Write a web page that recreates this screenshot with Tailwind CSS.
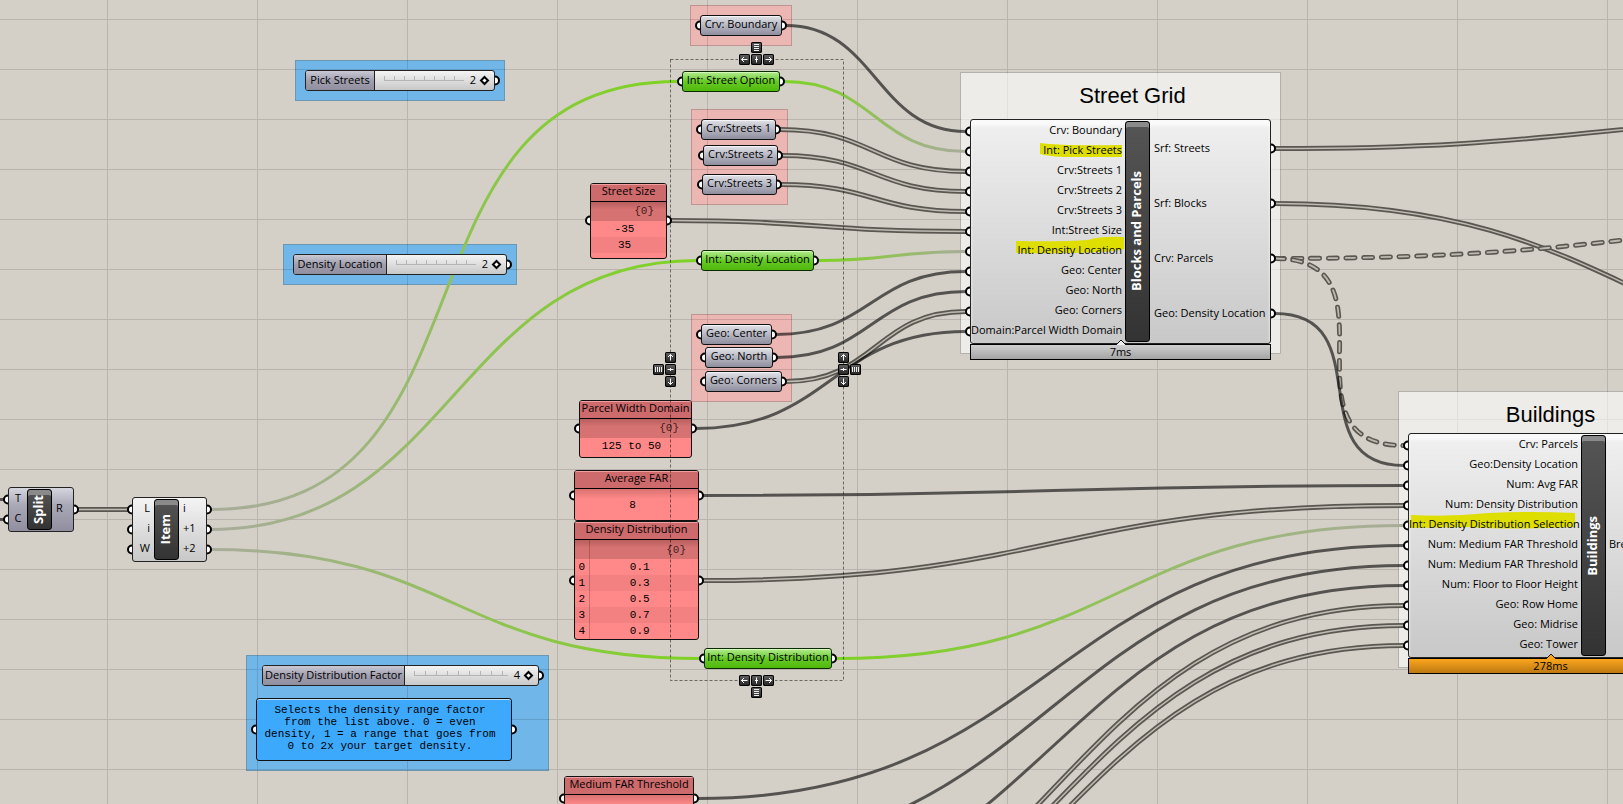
<!DOCTYPE html>
<html lang="en">
<head>
<meta charset="utf-8">
<title>Street Grid definition</title>
<script src="https://cdn.jsdelivr.net/npm/@tailwindcss/browser@4"></script>
</head>
<body class="bg-[#d4d0c8]">
<main class="relative h-screen w-full overflow-hidden bg-[#d4d0c8] font-['Open_Sans','Noto_Sans',sans-serif] text-[11px] leading-5 text-black">

  <!-- groups -->
  <section class="absolute left-[295px] top-[60px] h-[41px] w-[210px] border border-[#6b97b3] bg-[#70b6e8]"></section>
  <section class="absolute left-[283px] top-[244px] h-[41px] w-[234px] border border-[#6b97b3] bg-[#70b6e8]"></section>
  <section class="absolute left-[246px] top-[655px] h-[116px] w-[303px] border border-[#6b97b3] bg-[#70b6e8]"></section>
  <section class="absolute left-[690px] top-[5px] h-[41px] w-[102px] border border-[#bd9593] bg-[#ecb6b3]"></section>
  <section class="absolute left-[691px] top-[109px] h-[96px] w-[97px] border border-[#bd9593] bg-[#ecb6b3]"></section>
  <section class="absolute left-[691px] top-[314px] h-[88px] w-[101px] border border-[#bd9593] bg-[#ecb6b3]"></section>
  <section class="absolute left-[960px] top-[72px] h-[282px] w-[321px] border border-[#b3b1ab] bg-[#edece8] pl-6 pt-2 text-center font-['Liberation_Sans',Arial,sans-serif] text-[22px] leading-[30px]"><h2 class="relative z-10">Street Grid</h2></section>
  <section class="absolute left-[1398px] top-[391px] h-[277px] w-[305px] border border-[#b3b1ab] bg-[#edece8] pt-2 text-center font-['Liberation_Sans',Arial,sans-serif] text-[22px] leading-[30px]"><h2 class="relative z-10">Buildings</h2></section>

  <!-- canvas grid, wires and ports -->
  <svg class="absolute inset-0 h-full w-full" aria-hidden="true">
    <defs>
      <pattern id="grid" x="107" y="19" width="150" height="50" patternUnits="userSpaceOnUse">
        <path d="M0 0H150V1H1V50H0Z" fill="#000" fill-opacity=".13"/>
      </pattern>
    </defs>
    <rect width="100%" height="100%" fill="url(#grid)"/>
    <path d="M961 73h319v280H961zM1399 392h300v275h-300z" fill="#edece8" fill-opacity=".6"/>
    <g id="wires" fill="none"></g>
    <g id="ports" fill="#fff" stroke="#000" stroke-width="2"></g>
  </svg>

  <!-- sliders -->
  <div class="absolute left-[305px] top-[70px] flex h-[21px] w-[190px] overflow-hidden rounded-[3px] border border-[#222] bg-linear-to-b from-[#f4f4f4] to-[#c8c8c8]">
    <label for="s1" class="w-[69px] border-r border-[#222] bg-linear-to-b from-[#c9c8d4] via-[#a19fae] to-[#918f9f] text-center leading-[17px]">Pick Streets</label>
    <div class="relative flex-1">
      <div class="absolute left-[9px] right-[30px] top-[5px] h-[5px] border-b border-[#b4b4b4] bg-[repeating-linear-gradient(90deg,#b4b4b4_0_1px,transparent_1px_10px)]"></div>
      <output for="s1" class="absolute right-[18px] leading-[17px]">2</output>
      <input id="s1" type="range" min="0" max="2" value="2" class="absolute right-[6px] top-[4px] h-[10px] w-[105px] appearance-none bg-transparent [&::-webkit-slider-thumb]:h-[7px] [&::-webkit-slider-thumb]:w-[7px] [&::-webkit-slider-thumb]:rotate-45 [&::-webkit-slider-thumb]:appearance-none [&::-webkit-slider-thumb]:border-2 [&::-webkit-slider-thumb]:border-black [&::-webkit-slider-thumb]:bg-white">
    </div>
  </div>
  <div class="absolute left-[293px] top-[254px] flex h-[21px] w-[214px] overflow-hidden rounded-[3px] border border-[#222] bg-linear-to-b from-[#f4f4f4] to-[#c8c8c8]">
    <label for="s2" class="w-[93px] border-r border-[#222] bg-linear-to-b from-[#c9c8d4] via-[#a19fae] to-[#918f9f] text-center leading-[17px]">Density Location</label>
    <div class="relative flex-1">
      <div class="absolute left-[9px] right-[30px] top-[5px] h-[5px] border-b border-[#b4b4b4] bg-[repeating-linear-gradient(90deg,#b4b4b4_0_1px,transparent_1px_10px)]"></div>
      <output for="s2" class="absolute right-[18px] leading-[17px]">2</output>
      <input id="s2" type="range" min="0" max="2" value="2" class="absolute right-[6px] top-[4px] h-[10px] w-[105px] appearance-none bg-transparent [&::-webkit-slider-thumb]:h-[7px] [&::-webkit-slider-thumb]:w-[7px] [&::-webkit-slider-thumb]:rotate-45 [&::-webkit-slider-thumb]:appearance-none [&::-webkit-slider-thumb]:border-2 [&::-webkit-slider-thumb]:border-black [&::-webkit-slider-thumb]:bg-white">
    </div>
  </div>
  <div class="absolute left-[262px] top-[665px] flex h-[21px] w-[277px] overflow-hidden rounded-[3px] border border-[#222] bg-linear-to-b from-[#f4f4f4] to-[#c8c8c8]">
    <label for="s3" class="w-[142px] border-r border-[#222] bg-linear-to-b from-[#c9c8d4] via-[#a19fae] to-[#918f9f] text-center leading-[17px]">Density Distribution Factor</label>
    <div class="relative flex-1">
      <div class="absolute left-[9px] right-[30px] top-[5px] h-[5px] border-b border-[#b4b4b4] bg-[repeating-linear-gradient(90deg,#b4b4b4_0_1px,transparent_1px_11px)]"></div>
      <output for="s3" class="absolute right-[18px] leading-[17px]">4</output>
      <input id="s3" type="range" min="0" max="4" value="4" class="absolute right-[6px] top-[4px] h-[10px] w-[120px] appearance-none bg-transparent [&::-webkit-slider-thumb]:h-[7px] [&::-webkit-slider-thumb]:w-[7px] [&::-webkit-slider-thumb]:rotate-45 [&::-webkit-slider-thumb]:appearance-none [&::-webkit-slider-thumb]:border-2 [&::-webkit-slider-thumb]:border-black [&::-webkit-slider-thumb]:bg-white">
    </div>
  </div>
  <p class="absolute left-[256px] top-[698px] h-[63px] w-[256px] rounded-[3px] border border-[#111] bg-[#3da9fc] pt-[5px] pr-2 text-center font-['Liberation_Mono',monospace] leading-3 whitespace-nowrap shadow-[inset_0_1px_0_#bfe2ff]">Selects the density range factor<br>from the list above. 0 = even<br>density, 1 = a range that goes from<br>0 to 2x your target density.</p>

  <!-- parameter capsules -->
  <div class="absolute left-[700px] top-[15px] h-[21px] w-[82px] rounded-[3px] border border-[#111] bg-linear-to-b from-[#e2e2e8] via-[#b6b6c2] to-[#8f8e9e] text-center leading-4 shadow-[inset_0_1px_0_#f4f4f8]">Crv: Boundary</div>
  <div class="absolute left-[682px] top-[71px] h-[21px] w-[98px] rounded-[3px] border border-[#0a2a00] bg-linear-to-b from-[#b4ec8c] via-[#66ca22] to-[#50b80c] text-center leading-4 shadow-[inset_0_1px_0_#d4f8b8]">Int: Street Option</div>
  <div class="absolute left-[701px] top-[119px] h-[21px] w-[75px] rounded-[3px] border border-[#111] bg-linear-to-b from-[#e2e2e8] via-[#b6b6c2] to-[#8f8e9e] text-center leading-4 shadow-[inset_0_1px_0_#f4f4f8]">Crv:Streets 1</div>
  <div class="absolute left-[703px] top-[145px] h-[21px] w-[75px] rounded-[3px] border border-[#111] bg-linear-to-b from-[#e2e2e8] via-[#b6b6c2] to-[#8f8e9e] text-center leading-4 shadow-[inset_0_1px_0_#f4f4f8]">Crv:Streets 2</div>
  <div class="absolute left-[702px] top-[174px] h-[21px] w-[75px] rounded-[3px] border border-[#111] bg-linear-to-b from-[#e2e2e8] via-[#b6b6c2] to-[#8f8e9e] text-center leading-4 shadow-[inset_0_1px_0_#f4f4f8]">Crv:Streets 3</div>
  <div class="absolute left-[701px] top-[250px] h-[21px] w-[113px] rounded-[3px] border border-[#0a2a00] bg-linear-to-b from-[#b4ec8c] via-[#66ca22] to-[#50b80c] text-center leading-4 shadow-[inset_0_1px_0_#d4f8b8]">Int: Density Location</div>
  <div class="absolute left-[701px] top-[324px] h-[21px] w-[71px] rounded-[3px] border border-[#111] bg-linear-to-b from-[#e2e2e8] via-[#b6b6c2] to-[#8f8e9e] text-center leading-4 shadow-[inset_0_1px_0_#f4f4f8]">Geo: Center</div>
  <div class="absolute left-[705px] top-[347px] h-[21px] w-[68px] rounded-[3px] border border-[#111] bg-linear-to-b from-[#e2e2e8] via-[#b6b6c2] to-[#8f8e9e] text-center leading-4 shadow-[inset_0_1px_0_#f4f4f8]">Geo: North</div>
  <div class="absolute left-[705px] top-[371px] h-[21px] w-[77px] rounded-[3px] border border-[#111] bg-linear-to-b from-[#e2e2e8] via-[#b6b6c2] to-[#8f8e9e] text-center leading-4 shadow-[inset_0_1px_0_#f4f4f8]">Geo: Corners</div>
  <div class="absolute left-[704px] top-[648px] h-[21px] w-[128px] rounded-[3px] border border-[#0a2a00] bg-linear-to-b from-[#b4ec8c] via-[#66ca22] to-[#50b80c] text-center leading-4 shadow-[inset_0_1px_0_#d4f8b8]">Int: Density Distribution</div>

  <!-- data panels -->
  <div class="absolute left-[590px] top-[183px] h-[76px] w-[77px] overflow-hidden rounded-[3px] border border-[#111] bg-[#ff8888] text-center font-['Liberation_Mono',monospace] leading-4">
    <h3 class="h-[18px] border-b border-black bg-[#cd6a6c] font-['Open_Sans',sans-serif] leading-[14px] shadow-[inset_0_1px_0_#f0a0a0]">Street Size</h3>
    <p class="h-[19px] bg-linear-to-b from-[#b85e5e] to-[#d67272] to-40% pr-3 text-right leading-[19px] text-black/75">{0}</p>
    <p class="pr-2">-35</p>
    <p class="bg-[#f38181] pr-2">35</p>
  </div>
  <div class="absolute left-[579px] top-[400px] h-[58px] w-[113px] overflow-hidden rounded-[3px] border border-[#111] bg-[#ff8888] text-center font-['Liberation_Mono',monospace] leading-4">
    <h3 class="h-[18px] border-b border-black bg-[#cd6a6c] font-['Open_Sans',sans-serif] leading-[14px] whitespace-nowrap shadow-[inset_0_1px_0_#f0a0a0]">Parcel Width Domain</h3>
    <p class="h-[19px] bg-linear-to-b from-[#b85e5e] to-[#d67272] to-40% pr-3 text-right leading-[19px] text-black/75">{0}</p>
    <p class="pr-2">125 to 50</p>
  </div>
  <div class="absolute left-[574px] top-[470px] h-[51px] w-[125px] overflow-hidden rounded-[3px] border border-[#111] bg-[#ff8888] text-center font-['Liberation_Mono',monospace]">
    <h3 class="h-[18px] border-b border-black bg-[#cd6a6c] font-['Open_Sans',sans-serif] leading-[14px] shadow-[inset_0_1px_0_#f0a0a0]">Average FAR</h3>
    <p class="h-[32px] bg-linear-to-b from-[#d87272] to-[#ff8888] to-30% pr-2 leading-[32px]">8</p>
  </div>
  <div class="absolute left-[574px] top-[521px] h-[119px] w-[125px] overflow-hidden rounded-[3px] border border-[#111] bg-[#ff8888] font-['Liberation_Mono',monospace] leading-4">
    <table class="w-full border-collapse text-center">
      <caption class="h-[18px] border-b border-black bg-[#cd6a6c] font-['Open_Sans',sans-serif] leading-[14px] shadow-[inset_0_1px_0_#f0a0a0]">Density Distribution</caption>
      <tbody>
      <tr class="h-[19px] bg-linear-to-b from-[#b85e5e] to-[#d67272] to-40%"><td class="w-[14px] border-r border-black/20 p-0"></td><td class="p-0 pr-3 text-right text-black/75">{0}</td></tr>
      <tr><th class="border-r border-black/20 p-0 font-normal">0</th><td class="p-0 pr-2">0.1</td></tr>
      <tr class="bg-[#f38181]"><th class="border-r border-black/20 p-0 font-normal">1</th><td class="p-0 pr-2">0.3</td></tr>
      <tr><th class="border-r border-black/20 p-0 font-normal">2</th><td class="p-0 pr-2">0.5</td></tr>
      <tr class="bg-[#f38181]"><th class="border-r border-black/20 p-0 font-normal">3</th><td class="p-0 pr-2">0.7</td></tr>
      <tr><th class="border-r border-black/20 p-0 font-normal">4</th><td class="p-0 pr-2">0.9</td></tr>
      </tbody>
    </table>
  </div>
  <div class="absolute left-[564px] top-[776px] h-[58px] w-[130px] overflow-hidden rounded-[3px] border border-[#111] bg-[#ff8888] text-center">
    <h3 class="h-[18px] border-b border-black bg-[#cd6a6c] leading-[14px] shadow-[inset_0_1px_0_#f0a0a0]">Medium FAR Threshold</h3>
    <p class="h-[32px] bg-linear-to-b from-[#d87272] to-[#ff8888] to-30%"></p>
  </div>

  <!-- Split -->
  <div class="absolute left-[8px] top-[487px] flex h-[45px] w-[66px] items-center rounded-[3px] border border-[#222] bg-linear-to-b from-[#d6d6de] via-[#a9a8b6] via-40% to-[#918f9f] py-px">
    <div class="w-[18px] pb-[3px] text-center"><p>T</p><p>C</p></div>
    <div class="flex h-full w-[25px] items-center justify-center rounded-[3px] border border-black bg-linear-to-b from-[#555] to-[#333] pr-[3px] text-[13px] font-bold text-white shadow-[inset_0_5px_0_#8a8a8a]"><span class="rotate-180 [writing-mode:vertical-rl]">Split</span></div>
    <p class="pb-[3px] pl-1">R</p>
  </div>
  <!-- Item -->
  <div class="absolute left-[132px] top-[497px] flex h-[65px] w-[75px] items-center rounded-[3px] border border-[#222] bg-linear-to-b from-[#f4f4f4] to-[#c8c8c8] py-px">
    <div class="w-[21px] pb-[3px] pr-1 text-right"><p>L</p><p>i</p><p>W</p></div>
    <div class="flex h-full w-[25px] items-center justify-center rounded-[3px] border border-black bg-linear-to-b from-[#555] to-[#333] pr-[3px] text-[13px] font-bold text-white shadow-[inset_0_5px_0_#8a8a8a]"><span class="rotate-180 [writing-mode:vertical-rl]">Item</span></div>
    <div class="pb-[3px] pl-1"><p>i</p><p>+1</p><p>+2</p></div>
  </div>

  <!-- Blocks and Parcels -->
  <div class="absolute left-[970px] top-[119px] h-[225px] w-[301px] rounded-[3px] border border-[#222] bg-linear-to-b from-[#f0f0f0] to-[#c8c8c8] shadow-[inset_0_6px_3px_#fafafa]">
    <svg class="absolute inset-0 h-full w-full" aria-hidden="true"><path d="M69 23Q90 26 151 25V37H92Q76 36 69 34ZM45 121Q90 122 117 120Q130 116 153 117V129L150 130Q120 134 45 133Z" fill="#dede00"/></svg>
    <div class="relative flex h-full">
      <ul class="w-[154px] whitespace-nowrap pr-[3px] text-right">
        <li>Crv: Boundary</li><li>Int: Pick Streets</li><li>Crv:Streets 1</li><li>Crv:Streets 2</li><li>Crv:Streets 3</li><li>Int:Street Size</li><li>Int: Density Location</li><li>Geo: Center</li><li>Geo: North</li><li>Geo: Corners</li><li>Domain:Parcel Width Domain</li>
      </ul>
      <div class="my-px flex w-[25px] items-center justify-center rounded-[3px] border border-black bg-linear-to-b from-[#555] to-[#333] pr-[3px] text-[13px] font-bold text-white shadow-[inset_0_5px_0_#8a8a8a]"><span class="rotate-180 [writing-mode:vertical-rl]">Blocks and Parcels</span></div>
      <ul class="pl-1 leading-[55px]"><li>Srf: Streets</li><li>Srf: Blocks</li><li>Crv: Parcels</li><li>Geo: Density Location</li></ul>
    </div>
  </div>
  <div class="absolute left-[970px] top-[344px] h-4 w-[301px] border border-black bg-linear-to-b from-[#cfcfcf] to-[#a4a4a4] text-center leading-[13px]">7ms
    <svg class="absolute -top-[6px] left-[144px] h-[6px] w-3" aria-hidden="true"><path d="M1 6L6 1L11 6" fill="#eee" stroke="#111"/></svg>
  </div>

  <!-- Buildings -->
  <div class="absolute left-[1408px] top-[433px] h-[225px] w-[285px] rounded-[3px] border border-[#222] bg-linear-to-b from-[#f0f0f0] to-[#c8c8c8] shadow-[inset_0_6px_3px_#fafafa]">
    <svg class="absolute inset-0 h-full w-full" aria-hidden="true"><path d="M2 81Q40 83 80 79Q120 77 166 79V93Q100 96 60 93L2 94Z" fill="#dede00"/></svg>
    <div class="relative flex h-full">
      <ul class="w-[172px] whitespace-nowrap pr-[3px] text-right">
        <li>Crv: Parcels</li><li>Geo:Density Location</li><li>Num: Avg FAR</li><li>Num: Density Distribution</li><li>Int: Density Distribution Selection</li><li>Num: Medium FAR Threshold</li><li>Num: Medium FAR Threshold</li><li>Num: Floor to Floor Height</li><li>Geo: Row Home</li><li>Geo: Midrise</li><li>Geo: Tower</li>
      </ul>
      <div class="my-px flex w-[25px] items-center justify-center rounded-[3px] border border-black bg-linear-to-b from-[#555] to-[#333] pr-[3px] text-[13px] font-bold text-white shadow-[inset_0_5px_0_#8a8a8a]"><span class="rotate-180 [writing-mode:vertical-rl]">Buildings</span></div>
      <p class="pl-[3px] leading-[220px]">Bre</p>
    </div>
  </div>
  <div class="absolute left-[1408px] top-[658px] h-4 w-[285px] border border-black bg-linear-to-b from-[#fba51c] to-[#bd7a12] text-center leading-[13px]">278ms
    <svg class="absolute -top-[6px] left-[136px] h-[6px] w-3" aria-hidden="true"><path d="M1 6L6 1L11 6" fill="#fba51c" stroke="#111"/></svg>
  </div>

  <!-- selection frame -->
  <div class="pointer-events-none absolute left-[670px] top-[59px] h-[622px] w-[174px]">
    <svg class="h-full w-full" aria-hidden="true"><rect x=".5" y=".5" width="173" height="621" fill="none" stroke="#000" stroke-opacity=".5" stroke-dasharray="3 2"/></svg>
  </div>

  <!-- alignment widgets -->
  <svg class="hidden">
    <symbol id="lines" viewBox="0 0 11 11"><path d="M3 2.5H8M3 4.5H8M3 6.5H8M3 8.5H8" stroke="#eee"/></symbol>
    <symbol id="bars" viewBox="0 0 11 11"><path d="M2.500 3V8M4.500 3V8M6.500 3V8M8.500 3V8" stroke="#eee"/></symbol>
    <symbol id="arrow" viewBox="0 0 11 11"><path d="M2.500 5.500H8.500M5 3L2.500 5.500L5 8" fill="none" stroke="#fff"/></symbol>
    <symbol id="mid" viewBox="0 0 11 11"><path d="M5.500 2.500V8.500M4 5.500H7" stroke="#fff"/></symbol>
  </svg>
  <div class="absolute left-[738px] top-[42px] grid grid-cols-3 gap-px bg-[linear-gradient(#d4d0c8,#d4d0c8)] bg-[length:100%_2px] bg-[position:0_17px] bg-no-repeat px-px">
    <button aria-label="Distribute columns" class="col-start-2 size-[11px] rounded-[2px] bg-linear-to-b from-[#666] to-[#222] ring-1 ring-black ring-inset"><svg class="size-[11px]"><use href="#lines"/></svg></button>
    <button aria-label="Align left" class="col-start-1 size-[11px] rounded-[2px] bg-linear-to-b from-[#666] to-[#222] ring-1 ring-black ring-inset"><svg class="size-[11px]"><use href="#arrow"/></svg></button>
    <button aria-label="Align centre" class="size-[11px] rounded-[2px] bg-linear-to-b from-[#666] to-[#222] ring-1 ring-black ring-inset"><svg class="size-[11px]"><use href="#mid"/></svg></button>
    <button aria-label="Align right" class="size-[11px] rounded-[2px] bg-linear-to-b from-[#666] to-[#222] ring-1 ring-black ring-inset"><svg class="size-[11px] rotate-180"><use href="#arrow"/></svg></button>
  </div>
  <div class="absolute left-[738px] top-[675px] grid grid-cols-3 gap-px bg-[linear-gradient(#d4d0c8,#d4d0c8)] bg-[length:100%_2px] bg-[position:0_5px] bg-no-repeat px-px">
    <button aria-label="Align left" class="size-[11px] rounded-[2px] bg-linear-to-b from-[#666] to-[#222] ring-1 ring-black ring-inset"><svg class="size-[11px]"><use href="#arrow"/></svg></button>
    <button aria-label="Align centre" class="size-[11px] rounded-[2px] bg-linear-to-b from-[#666] to-[#222] ring-1 ring-black ring-inset"><svg class="size-[11px]"><use href="#mid"/></svg></button>
    <button aria-label="Align right" class="size-[11px] rounded-[2px] bg-linear-to-b from-[#666] to-[#222] ring-1 ring-black ring-inset"><svg class="size-[11px] rotate-180"><use href="#arrow"/></svg></button>
    <button aria-label="Distribute columns" class="col-start-2 size-[11px] rounded-[2px] bg-linear-to-b from-[#666] to-[#222] ring-1 ring-black ring-inset"><svg class="size-[11px]"><use href="#lines"/></svg></button>
  </div>
  <div class="absolute left-[653px] top-[352px] grid grid-cols-2 gap-px">
    <button aria-label="Align top" class="col-start-2 size-[11px] rounded-[2px] bg-linear-to-b from-[#666] to-[#222] ring-1 ring-black ring-inset"><svg class="size-[11px] rotate-90"><use href="#arrow"/></svg></button>
    <button aria-label="Distribute rows" class="col-start-1 size-[11px] rounded-[2px] bg-linear-to-b from-[#666] to-[#222] ring-1 ring-black ring-inset"><svg class="size-[11px]"><use href="#bars"/></svg></button>
    <button aria-label="Align middle" class="size-[11px] rounded-[2px] bg-linear-to-b from-[#666] to-[#222] ring-1 ring-black ring-inset"><svg class="size-[11px] rotate-90"><use href="#mid"/></svg></button>
    <button aria-label="Align bottom" class="col-start-2 size-[11px] rounded-[2px] bg-linear-to-b from-[#666] to-[#222] ring-1 ring-black ring-inset"><svg class="size-[11px] -rotate-90"><use href="#arrow"/></svg></button>
  </div>
  <div class="absolute left-[838px] top-[352px] grid grid-cols-2 gap-px">
    <button aria-label="Align top" class="col-start-1 size-[11px] rounded-[2px] bg-linear-to-b from-[#666] to-[#222] ring-1 ring-black ring-inset"><svg class="size-[11px] rotate-90"><use href="#arrow"/></svg></button>
    <button aria-label="Align middle" class="col-start-1 size-[11px] rounded-[2px] bg-linear-to-b from-[#666] to-[#222] ring-1 ring-black ring-inset"><svg class="size-[11px] rotate-90"><use href="#mid"/></svg></button>
    <button aria-label="Distribute rows" class="size-[11px] rounded-[2px] bg-linear-to-b from-[#666] to-[#222] ring-1 ring-black ring-inset"><svg class="size-[11px]"><use href="#bars"/></svg></button>
    <button aria-label="Align bottom" class="col-start-1 size-[11px] rounded-[2px] bg-linear-to-b from-[#666] to-[#222] ring-1 ring-black ring-inset"><svg class="size-[11px] -rotate-90"><use href="#arrow"/></svg></button>
  </div>
</main>

<script>
const NS = 'http://www.w3.org/2000/svg';
const wires = document.getElementById('wires');
const ports = document.getElementById('ports');
function add(parent, tag, attrs) {
  const el = document.createElementNS(NS, tag);
  for (const k in attrs) el.setAttribute(k, attrs[k]);
  parent.appendChild(el);
  return el;
}
// kind: s = item, d = list, t = tree, i / o = wire into / out of a selected parameter
const links = [
  ['i', 211, 509.5, 678, 81.5], ['i', 211, 529.5, 697, 260.5], ['i', 211, 549.5, 700, 658.5],
  ['o', 784, 81.5, 966, 151.5], ['o', 818, 260.5, 966, 251.5], ['o', 836, 658.5, 1404, 525.5],
  ['s', 786, 25.5, 966, 131.5], ['d', 780, 129.5, 966, 171.5], ['d', 782, 155.5, 966, 191.5],
  ['d', 781, 184.5, 966, 211.5], ['d', 671, 220.5, 966, 231.5], ['s', 776, 334.5, 966, 271.5],
  ['s', 777, 357.5, 966, 291.5], ['d', 786, 381.5, 966, 311.5], ['s', 696, 428.5, 966, 331.5],
  ['s', 703, 495.5, 1404, 485.5], ['d', 703, 580.5, 1404, 505.5], ['s', 698, 798.5, 1404, 545.5],
  ['s', 698, 850.5, 1404, 565.5], ['s', 698, 910.5, 1404, 585.5], ['d', 698, 976.5, 1404, 605.5],
  ['d', 698, 989.5, 1404, 625.5], ['d', 698, 1004.5, 1404, 645.5],
  ['d', 1275, 148.5, 1900, 117.5], ['d', 1275, 203.5, 2000, 375.5], ['t', 1275, 258.5, 2050, 212.5],
  ['t', 1275, 258.5, 1404, 445.5], ['s', 1275, 313.5, 1404, 465.5],
  ['d', 78, 509.5, 128, 509.5], ['s', -60, 488.5, 4, 499.5], ['s', -60, 519.5, 4, 519.5]
];
const defs = add(wires, 'defs', {});
links.forEach(([kind, x1, y1, x2, y2], n) => {
  const r = Math.max((x2 - x1) / 2, Math.abs(y2 - y1) * 0.7);
  const d = `M${x1} ${y1}C${x1 + r} ${y1} ${x2 - r} ${y2} ${x2} ${y2}`;
  if (kind === 's') add(wires, 'path', { d, stroke: '#000', 'stroke-opacity': .6, 'stroke-width': 3 });
  if (kind === 'd') {
    add(wires, 'path', { d, stroke: '#595750', 'stroke-width': 5 });
    add(wires, 'path', { d, stroke: '#bebbb3', 'stroke-width': 1.5 });
  }
  if (kind === 't') {
    add(wires, 'path', { d, stroke: '#595750', 'stroke-width': 5, 'stroke-linecap': 'round', 'stroke-dasharray': '9 8.7' });
    add(wires, 'path', { d, stroke: '#bcb9b1', 'stroke-width': 1.8, 'stroke-linecap': 'round', 'stroke-dasharray': '9 8.7' });
  }
  if (kind === 'i' || kind === 'o') {
    const g = add(defs, 'linearGradient', { id: 'w' + n, gradientUnits: 'userSpaceOnUse', x1, y1, x2, y2 });
    const stops = kind === 'i' ? ['#a8ac9a', '#7ed321'] : ['#7ed321', '#a8ac9a'];
    add(g, 'stop', { offset: 0, 'stop-color': stops[0] });
    add(g, 'stop', { offset: 1, 'stop-color': stops[1] });
    add(wires, 'path', { d, stroke: `url(#w${n})`, 'stroke-width': 3 });
  }
});
const spots = [
  [495, 80.5], [507, 264.5], [539, 675.5], [256, 729.5], [512, 729.5],
  [700, 25.5], [782, 25.5], [682, 81.5], [780, 81.5], [701, 129.5], [776, 129.5], [703, 155.5], [778, 155.5],
  [702, 184.5], [777, 184.5], [701, 260.5], [814, 260.5], [701, 334.5], [772, 334.5], [705, 357.5], [773, 357.5],
  [705, 381.5], [782, 381.5], [704, 658.5], [832, 658.5],
  [590, 220.5], [667, 220.5], [579, 428.5], [692, 428.5], [574, 495.5], [699, 495.5], [574, 580.5], [699, 580.5],
  [564, 798.5], [694, 798.5], [8, 499.5], [8, 519.5], [74, 509.5],
  [132, 509.5], [132, 529.5], [132, 549.5], [207, 509.5], [207, 529.5], [207, 549.5],
  [1271, 148.5], [1271, 203.5], [1271, 258.5], [1271, 313.5]
];
for (let k = 0; k < 11; k++) spots.push([970, 131.5 + 20 * k], [1408, 445.5 + 20 * k]);
spots.forEach(([cx, cy]) => add(ports, 'circle', { cx, cy, r: 4 }));
</script>
</body>
</html>
